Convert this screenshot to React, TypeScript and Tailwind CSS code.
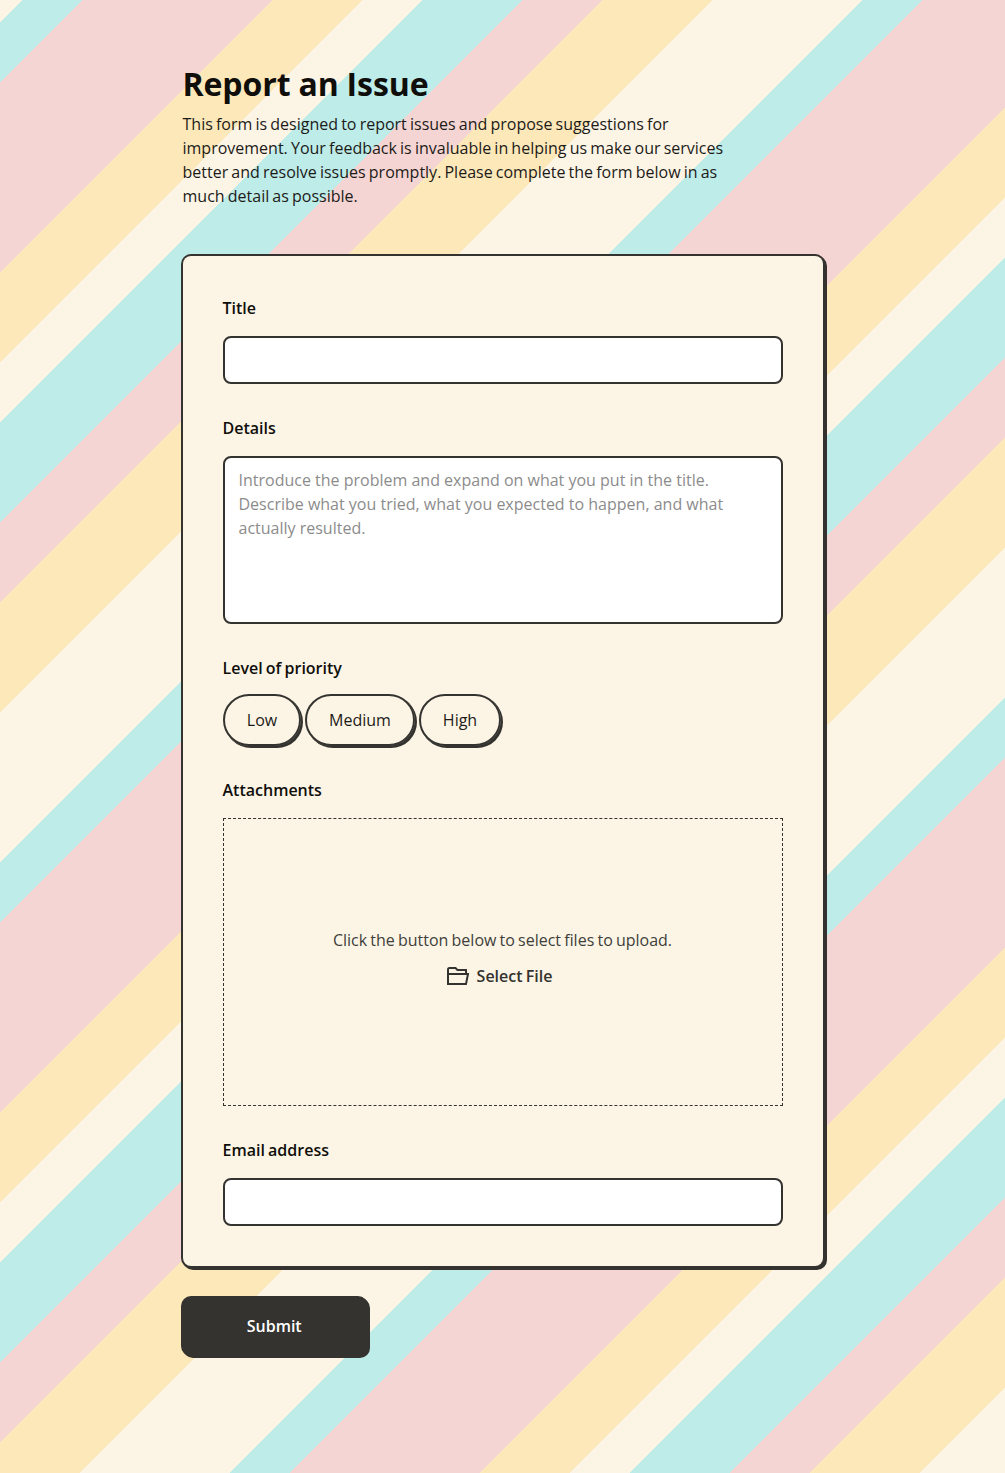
import React from "react";

const STRIPES: [string, number][] = [
  ["#fcf5e6", 22],
  ["#beece9", 82],
  ["#f5d5d3", 272],
  ["#fde8ba", 362],
  ["#fcf5e6", 422],
  ["#beece9", 522],
  ["#f5d5d3", 602],
  ["#fde8ba", 712],
  ["#fcf5e6", 840],
];

const background = `repeating-linear-gradient(135deg, ${STRIPES.map(([color, end], i) => {
  const start = i === 0 ? 0 : STRIPES[i - 1][1] + 0.7;
  const stop = i === STRIPES.length - 1 ? end : end + 0.7;
  return `${color} ${(start / Math.SQRT2).toFixed(3)}px ${(stop / Math.SQRT2).toFixed(3)}px`;
}).join(", ")})`;

function Field({ label, children }: { label: string; children: React.ReactNode }) {
  return (
    <div className="flex flex-col gap-4">
      <div className="h-6 font-semibold text-[#0f0e0b] [word-spacing:-1px]">{label}</div>
      {children}
    </div>
  );
}

function FolderIcon() {
  return (
    <svg width="24" height="24" viewBox="0 0 24 24" fill="none" stroke="#34332f" strokeWidth="2">
      <path d="M20 9V6H11.5L9.5 4H3.5Q2 4 2 5.5V20H20L22 10H2" />
    </svg>
  );
}

export default function App() {
  return (
    <div
      className="flex min-h-[1473px] flex-col items-center pt-16 font-['Open_Sans',sans-serif] text-base leading-6"
      style={{ background }}
    >
      <main className="w-[640px]">
        <h1 className="h-10 text-[32px] leading-10 font-bold tracking-[-0.08px] text-[#0f0e0b] [word-spacing:-0.3px]">
          Report an Issue
        </h1>
        <p className="mt-2 w-[560px] text-[#1c1b18] [word-spacing:-1px]">
          This form is designed to report issues and propose suggestions for improvement. Your feedback is
          invaluable in helping us make our services better and resolve issues promptly. Please complete the form
          below in as much detail as possible.
        </p>

        <form className="mt-12 flex flex-col gap-8 rounded-lg bg-[#fcf5e6] p-10 shadow-[0_0_0_2px_#34332f,1px_1px_0_2px_#34332f,2px_2px_0_2px_#34332f]">
          <Field label="Title">
            <input className="h-12 w-full rounded-lg border-2 border-[#34332f] bg-white px-3.5 outline-none" />
          </Field>
          <Field label="Details">
            <textarea
              className="block h-[168px] w-full resize-none rounded-lg border-2 border-[#34332f] bg-white px-3.5 py-2.5 outline-none placeholder:text-[#8c8c8c]"
              placeholder="Introduce the problem and expand on what you put in the title. Describe what you tried, what you expected to happen, and what actually resulted."
            />
          </Field>
          <Field label="Level of priority">
            <div className="-mt-0.5 flex gap-1 text-[#1c1b18]">
              {[
                ["Low", "w-[78px]"],
                ["Medium", "w-[110px]"],
                ["High", "w-[82px]"],
              ].map(([level, width]) => (
                <button
                  key={level}
                  type="button"
                  className={`h-[52px] rounded-full border-2 border-[#34332f] pl-px text-center shadow-[1px_1px_0_0_#34332f,2px_2px_0_0_#34332f] ${width}`}
                >
                  {level}
                </button>
              ))}
            </div>
          </Field>
          <Field label="Attachments">
            <div className="flex h-72 flex-col items-center justify-center gap-3 border border-dashed border-[#34332f] pb-2 text-[#34332f]">
              <p className="text-[#403f3b] [word-spacing:-1px]">Click the button below to select files to upload.</p>
              <button type="button" className="mr-[7px] flex items-center gap-[7px] font-semibold [word-spacing:-1px]">
                <FolderIcon />
                Select File
              </button>
            </div>
          </Field>
          <Field label="Email address">
            <input className="h-12 w-full rounded-lg border-2 border-[#34332f] bg-white px-3.5 outline-none" />
          </Field>
        </form>

        <button
          type="button"
          className="mt-8 h-14 w-[183.4px] rounded-lg bg-[#34332f] font-semibold text-white shadow-[0_0_0_2px_#34332f,1px_1px_0_2px_#34332f,2px_2px_0_2px_#34332f]"
        >
          Submit
        </button>
      </main>
    </div>
  );
}
